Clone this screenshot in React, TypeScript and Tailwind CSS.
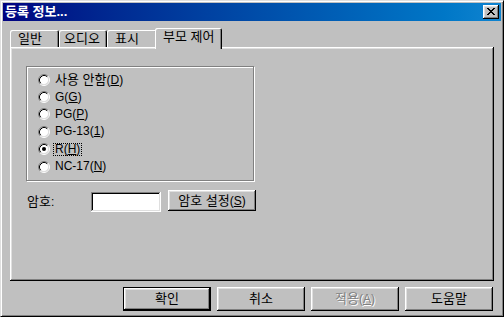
import type { ReactNode } from 'react';

const raised =
  'shadow-[inset_-1px_-1px_#000,inset_1px_1px_#fff,inset_-2px_-2px_#808080,inset_2px_2px_#dfdfdf]';
const sunken =
  'shadow-[inset_-1px_-1px_#fff,inset_1px_1px_#808080,inset_-2px_-2px_#dfdfdf,inset_2px_2px_#000]';
const tabEdge = 'shadow-[inset_1px_1px_#fff,inset_-1px_0_#000,inset_-2px_0_#808080]';

const ratings = [
  { ko: '사용 안함', pre: '(', key: 'D', post: ')', checked: false },
  { ko: '', pre: 'G(', key: 'G', post: ')', checked: false },
  { ko: '', pre: 'PG(', key: 'P', post: ')', checked: false },
  { ko: '', pre: 'PG-13(', key: '1', post: ')', checked: false },
  { ko: '', pre: 'R(', key: 'H', post: ')', checked: true },
  { ko: '', pre: 'NC-17(', key: 'N', post: ')', checked: false }
];

// hangul in Noto looks small next to Gulim, bump it a pixel
function Ko({ children }: { children: ReactNode }) {
  return <span className="text-[13px]">{children}</span>;
}

function Radio({ checked }: { checked: boolean }) {
  return (
    <svg width="12" height="12" viewBox="0 0 12 12" className="shrink-0">
      <circle cx="6" cy="6" r="4.5" fill="#fff" />
      <path d="M9.89 2.11 A5.5 5.5 0 0 0 2.11 9.89" fill="none" stroke="#808080" />
      <path d="M2.11 9.89 A5.5 5.5 0 0 0 9.89 2.11" fill="none" stroke="#fff" />
      <path d="M9.18 2.82 A4.5 4.5 0 0 0 2.82 9.18" fill="none" stroke="#000" />
      <path d="M2.82 9.18 A4.5 4.5 0 0 0 9.18 2.82" fill="none" stroke="#dfdfdf" />
      {checked && <circle cx="6" cy="6" r="2" fill="#000" />}
    </svg>
  );
}

function CloseGlyph() {
  const px = [
    [0, 0], [1, 0], [6, 0], [7, 0],
    [1, 1], [2, 1], [5, 1], [6, 1],
    [2, 2], [3, 2], [4, 2], [5, 2],
    [3, 3], [4, 3],
    [2, 4], [3, 4], [4, 4], [5, 4],
    [1, 5], [2, 5], [5, 5], [6, 5],
    [0, 6], [1, 6], [6, 6], [7, 6]
  ];
  return (
    <svg width="8" height="7" viewBox="0 0 8 7" shapeRendering="crispEdges">
      {px.map(([x, y]) => (
        <rect key={`${x}-${y}`} x={x} y={y} width="1" height="1" fill="#000" />
      ))}
    </svg>
  );
}

function Button({
  children,
  isDefault,
  disabled,
  className = ''
}: {
  children: ReactNode;
  isDefault?: boolean;
  disabled?: boolean;
  className?: string;
}) {
  return (
    <button
      className={`flex items-center justify-center bg-[#c0c0c0] ${raised} ${
        disabled ? 'text-[#808080] [text-shadow:1px_1px_0_#fff]' : 'text-black'
      } ${isDefault ? 'border border-black' : ''} ${className}`}
    >
      {children}
    </button>
  );
}

export default function App() {
  return (
    <div className="w-[504px] h-[317px] bg-[#c0c0c0] border border-t-[#dfdfdf] border-l-[#dfdfdf] border-r-black border-b-black shadow-[inset_1px_1px_#fff,inset_-1px_-1px_#808080] p-[2px] font-['Liberation_Sans','Noto_Sans_CJK_KR',sans-serif] text-[12px] text-black overflow-hidden">
      {/* Title bar */}
      <div className="h-[18px] flex items-center justify-between bg-linear-to-r from-[#000080] to-[#1084d0] pl-[2px] pr-[2px]">
        <span className="text-white font-bold text-[13px] leading-[18px]">등록 정보...</span>
        <div className={`w-[16px] h-[14px] bg-[#c0c0c0] flex items-center justify-center pb-[1px] ${raised}`}>
          <CloseGlyph />
        </div>
      </div>

      <div className="px-[7px]">
        {/* Tabs */}
        <div className="mt-[7px] h-[19px] flex items-end text-[13px]">
          <div className={`w-[49px] h-[17px] pl-[8px] leading-[18px] rounded-t-[2px] ${tabEdge}`}>일반</div>
          <div className={`w-[48px] h-[17px] pl-[5px] leading-[18px] rounded-t-[2px] ${tabEdge}`}>오디오</div>
          <div className={`w-[50px] h-[17px] pl-[8px] leading-[18px] rounded-t-[2px] ${tabEdge}`}>표시</div>
          <div
            className={`relative z-10 w-[67px] h-[21px] -ml-[2px] -mb-[2px] pl-[8px] leading-[17px] bg-[#c0c0c0] rounded-t-[2px] ${tabEdge}`}
          >
            부모 제어
          </div>
        </div>

        {/* Panel */}
        <div className={`h-[234px] ${raised} pl-[16px] pt-[19px]`}>
          <div className="w-[228px] h-[115px] border border-[#808080] shadow-[inset_1px_1px_#fff,1px_1px_#fff] pt-[4px] pl-[11px]">
            {ratings.map((r) => (
              <div key={r.pre} className="h-[17.4px] flex items-center gap-[3px]">
                <Radio checked={r.checked} />
                <span
                  className={`px-[1px] leading-[11px] border ${
                    r.checked ? 'border-dotted border-black' : 'border-transparent'
                  }`}
                >
                  {r.ko && <Ko>{r.ko}</Ko>}
                  {r.pre}
                  <u>{r.key}</u>
                  {r.post}
                </span>
              </div>
            ))}
          </div>

          <div className="mt-[9px] flex items-start">
            <span className="w-[65px] pl-[1px] h-[22px] leading-[24px]">
              <Ko>암호</Ko>:
            </span>
            <div className={`w-[70px] h-[20px] mt-[2px] bg-white ${sunken}`} />
            <Button className="ml-[7px] w-[88px] h-[21px]">
              <Ko>암호 설정</Ko>(<u>S</u>)
            </Button>
          </div>
        </div>

        {/* Bottom buttons */}
        <div className="mt-[6px] flex justify-end gap-[6px] pr-[1px]">
          <Button isDefault className="w-[88px] h-[24px]">
            <Ko>확인</Ko>
          </Button>
          <Button className="w-[88px] h-[24px]">
            <Ko>취소</Ko>
          </Button>
          <Button disabled className="w-[88px] h-[24px]">
            <Ko>적용</Ko>(<u>A</u>)
          </Button>
          <Button className="w-[88px] h-[24px]">
            <Ko>도움말</Ko>
          </Button>
        </div>
      </div>
    </div>
  );
}
